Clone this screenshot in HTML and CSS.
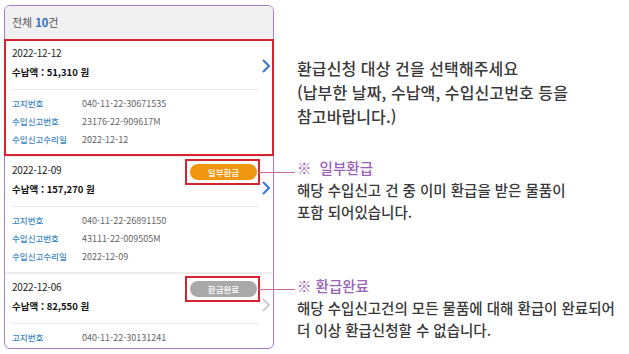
FILE: index.html
```html
<!DOCTYPE html>
<html lang="ko">
<head>
  <meta charset="UTF-8" />
  <meta name="viewport" content="width=device-width, initial-scale=1" />
  <title>환급신청 대상 선택</title>
  <link rel="stylesheet" href="styles.css">
</head>
<body>
  <div class="page">
    <div class="frame">
      <div class="total">전체 <b>10</b>건</div>

      <div class="item selected">
        <div class="item-top">
          <div class="summary">
            <div class="date">2022-12-12</div>
            <div class="amount">수납액 : 51,310 원</div>
          </div>
          <svg class="chev" width="8" height="14" viewBox="0 0 8 14"><path d="M1 1l6 6-6 6" fill="none" stroke="#3e72d6" stroke-width="2"/></svg>
        </div>
        <dl class="meta">
          <div class="row"><dt>고지번호</dt><dd>040-11-22-30671535</dd></div>
          <div class="row"><dt>수입신고번호</dt><dd>23176-22-909617M</dd></div>
          <div class="row"><dt>수입신고수리일</dt><dd>2022-12-12</dd></div>
        </dl>
      </div>

      <div class="item">
        <div class="item-top">
          <div class="summary">
            <div class="date">2022-12-09</div>
            <div class="amount">수납액 : 157,270 원</div>
          </div>
          <div class="badge-box"><span class="badge partial">일부환급</span></div>
          <svg class="chev low" width="8" height="14" viewBox="0 0 8 14"><path d="M1 1l6 6-6 6" fill="none" stroke="#3e72d6" stroke-width="2"/></svg>
        </div>
        <dl class="meta">
          <div class="row"><dt>고지번호</dt><dd>040-11-22-26891150</dd></div>
          <div class="row"><dt>수입신고번호</dt><dd>43111-22-009505M</dd></div>
          <div class="row"><dt>수입신고수리일</dt><dd>2022-12-09</dd></div>
        </dl>
      </div>

      <div class="item">
        <div class="item-top">
          <div class="summary">
            <div class="date">2022-12-06</div>
            <div class="amount">수납액 : 82,550 원</div>
          </div>
          <div class="badge-box"><span class="badge done">환급완료</span></div>
          <svg class="chev low" width="8" height="14" viewBox="0 0 8 14"><path d="M1 1l6 6-6 6" fill="none" stroke="#bdbdbd" stroke-width="1.5"/></svg>
        </div>
        <dl class="meta">
          <div class="row"><dt>고지번호</dt><dd>040-11-22-30131241</dd></div>
        </dl>
      </div>
    </div>

    <div class="notes">
      <p class="lead">환급신청 대상 건을 선택해주세요<br>(납부한 날짜, 수납액, 수입신고번호 등을<br>참고바랍니다.)</p>
      <div class="note first">
        <div class="note-title">※ &nbsp;일부환급</div>
        <p>해당 수입신고 건 중 이미 환급을 받은 물품이<br>포함 되어있습니다.</p>
      </div>
      <div class="note second">
        <div class="note-title">※ 환급완료</div>
        <p>해당 수입신고건의 모든 물품에 대해 환급이 완료되어<br>더 이상 환급신청할 수 없습니다.</p>
      </div>
    </div>
  </div>
</body>
</html>
```

FILE: styles.css
```css
* { margin: 0; padding: 0; box-sizing: border-box; }
body {
  background: #fff;
  font-family: "Noto Sans CJK KR", "Noto Sans", sans-serif;
  color: #333;
}
.page {
  display: flex;
  align-items: flex-start;
  padding: 5px 0 0 4px;
}
.frame {
  width: 270px;
  height: 344px;
  border: 1.5px solid #a77dc4;
  border-radius: 6px;
  background: #fff;
  flex: none;
}
.total {
  height: 33px;
  line-height: 33px;
  padding-left: 7px;
  background: #f0f0f0;
  border-radius: 5px 5px 0 0;
  font-size: 11px;
  color: #555;
}
.total b { color: #2b6cc4; }

.item {
  padding: 0 3px 0 7px;
  border-top: 2px solid #ececec;
}
.item.selected {
  border-top: none;
  outline: 2px solid #d7232f;
  outline-offset: -1px;
  margin-top: 1px;
}
.item-top {
  display: flex;
  align-items: flex-start;
}
.summary { flex: 1; padding-top: 6px; }
.date {
  font-size: 10px;
  line-height: 14px;
  color: #222;
  letter-spacing: -0.2px;
}
.amount {
  margin-top: 4px;
  font-size: 9.5px;
  line-height: 16px;
  font-weight: 700;
  color: #111;
}
.chev { margin: 19px 0 0 2px; flex: none; }
.chev.low { margin-top: 24px; }

.badge-box {
  margin-top: 2px;
  padding: 3px 1px 3px 3px;
  border: 2px solid #d7232f;
  position: relative;
}
.badge-box::after {
  content: "";
  position: absolute;
  left: 100%;
  top: 50%;
  width: 37px;
  height: 1px;
  background: #c7689b;
}
.badge {
  display: block;
  width: 67px;
  height: 16px;
  line-height: 16px;
  border-radius: 8px;
  text-align: center;
  font-size: 8.5px;
  font-weight: 500;
  color: #fff;
}
.badge.partial { background: #f0960f; }
.badge.done { background: #a9a9a9; }

.meta {
  margin: 9px 11px 0 0;
  padding: 4px 0 7px;
  border-top: 1px solid #e8e8e8;
}
.row {
  display: flex;
  height: 18px;
  align-items: center;
}
dt {
  width: 70px;
  font-size: 8.5px;
  font-weight: 500;
  color: #3a86c8;
}
dd {
  font-size: 9px;
  color: #666;
}

.notes {
  margin-left: 23px;
  padding-top: 51px;
  white-space: nowrap;
}
.lead {
  font-size: 16px;
  line-height: 24px;
  font-weight: 500;
  letter-spacing: 0.1px;
  color: #383838;
}
.note p {
  font-size: 14.5px;
  line-height: 22px;
  font-weight: 500;
  color: #383838;
}
.note-title {
  font-size: 14.5px;
  line-height: 22px;
  font-weight: 500;
  color: #9a62b8;
}
.note.first { margin-top: 29px; }
.note.second { margin-top: 52px; }
```
